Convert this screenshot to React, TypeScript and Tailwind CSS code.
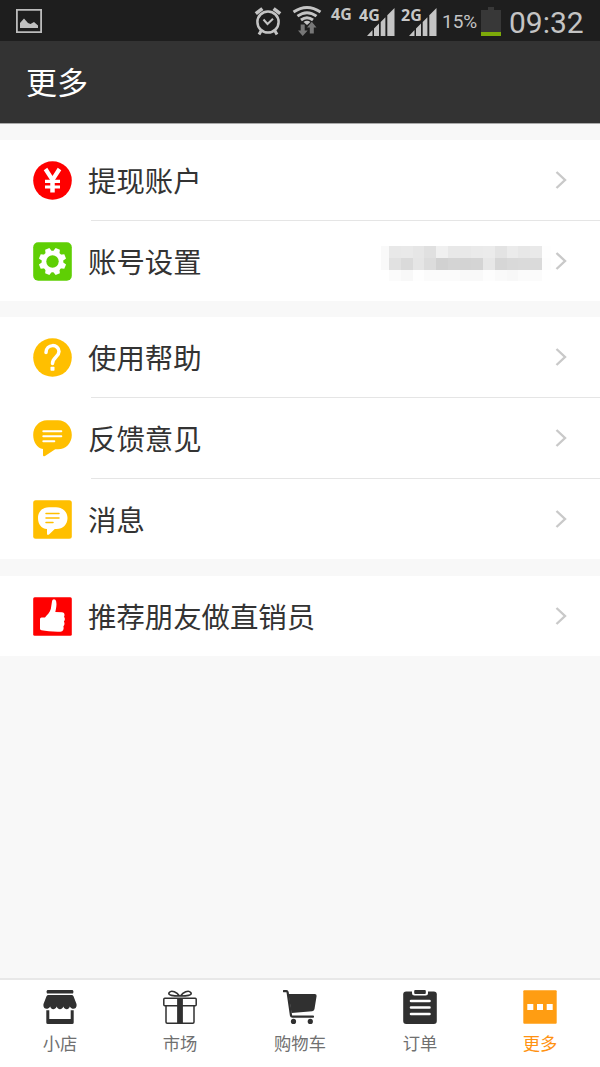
import type { ReactNode } from "react";

const mosaic: string[][] = [
  ["#f9f9f9", "#e8e8e8", "#e9e9e9", "#e6e6e6", "#e0e0e0", "#f0f0f0", "#e8e8e8", "#e8e8e8", "#eaeaea", "#ebebeb", "#e3e3e3", "#ebebeb", "#e7e7e7", "#e9e9e9", "#fefefe"],
  ["#f9f9f9", "#e1e1e1", "#dadada", "#e5e5e5", "#dcdcdc", "#d1d1d1", "#d4d4d4", "#d3d3d3", "#d4d4d4", "#e7e7e7", "#d6d6d6", "#d9d9d9", "#dadada", "#dadada", "#fdfdfd"],
  ["#ffffff", "#fbfbfb", "#f8f8f8", "#fefefe", "#fbfbfb", "#fbfbfb", "#fbfbfb", "#f9f9f9", "#f9f9f9", "#fdfdfd", "#fafafa", "#f8f8f8", "#fbfbfb", "#fbfbfb", "#ffffff"],
];

const toothAngles = [22.5, 67.5, 112.5, 157.5, 202.5, 247.5, 292.5, 337.5];

function PictureIcon() {
  return (
    <svg className="block" width="26" height="24" viewBox="0 0 26 24">
      <path d="M.9.9h24.2v22.2H.9z" fill="none" stroke="#bcbcbc" strokeWidth="1.8" />
      <path d="M4 19v-5l4-4.500 4 4.500 2.500 1L18 13l4 3.500V19z" fill="#c0c0c0" />
    </svg>
  );
}

function AlarmIcon() {
  return (
    <svg className="block" width="28" height="30" viewBox="0 0 28 30" fill="none" stroke="#c4c4c4">
      <circle cx="14" cy="16" r="10.600" strokeWidth="2.500" />
      <path d="M1.800 7.700 8.400 2.600M26.200 7.700 19.600 2.600" strokeWidth="3.600" />
      <path d="m9.500 13.500 4 4.500 5.500-5.300" strokeWidth="2" />
      <path d="m7 25-2 3.500M21 25l2 3.500" strokeWidth="3" />
    </svg>
  );
}

function WifiIcon() {
  return (
    <svg className="block" width="30" height="32" viewBox="0 0 30 32">
      <g fill="none" stroke="#c4c4c4" strokeWidth="2.900">
        <path d="M1.500 8Q15-1 28.500 8" />
        <path d="M5.500 12.200Q15 5.200 24.500 12.200" />
        <path d="M9 16Q15 11.500 21 16" />
      </g>
      <path d="m11.500 18 3.500 3 3.500-3Q15 15.400 11.500 18z" fill="#c4c4c4" />
      <path d="M8.700 20.500h4v6h3L10.700 32l-4.700-5.500h2.700zM17.800 29.500h4v-6h2.700L19.800 17.700 15 23.500h2.800z" fill="#777" />
    </svg>
  );
}

function Signal({ label }: { label: string }) {
  return (
    <div className="relative h-7 w-[28px]">
      <svg className="block" width="28" height="28" viewBox="0 0 28 28" fill="#c4c4c4">
        <path d="M0 28 5.500 22v6zM7 20.500l5-5V28H7zM13.700 14l4.700-4.700V28h-4.700zM20.300 7.300 27.500 0v28h-7.200z" />
      </svg>
      <span className="absolute -top-px -left-[8px] text-[16px] leading-4 font-bold text-[#c8c8c8] [font-family:'Noto_Sans',sans-serif] [text-shadow:0_0_2px_#1e1e1e,1px_1px_1px_#1e1e1e]">
        {label}
      </span>
    </div>
  );
}

function YenIcon() {
  return (
    <svg className="block" width="39" height="39" viewBox="0 0 39 39">
      <circle cx="19.500" cy="19.500" r="19.300" fill="#f00" />
      <path d="m12.500 8 7 10.800L26.500 8" fill="none" stroke="#fff" strokeWidth="4.200" />
      <path d="M12 20.300h15M12 26h15" stroke="#fff" strokeWidth="3.200" />
      <path d="M19.500 18v13.500" stroke="#fff" strokeWidth="4.500" />
    </svg>
  );
}

function GearIcon() {
  return (
    <svg className="block" width="39" height="39" viewBox="0 0 39 39">
      <rect x=".2" y=".2" width="38.600" height="38.600" rx="5" fill="#5fcf04" />
      <g fill="#fff" transform="translate(19.500 19.500)">
        <circle r="10.800" />
        {toothAngles.map((angle) => (
          <path key={angle} d="M-2.300-13.700h4.600l1.200 4.200h-7z" transform={`rotate(${angle})`} />
        ))}
        <circle r="6.200" fill="#5fcf04" />
      </g>
    </svg>
  );
}

function HelpIcon() {
  return (
    <svg className="block" width="39" height="39" viewBox="0 0 39 39">
      <circle cx="19.500" cy="19.500" r="19.300" fill="#ffbf00" />
      <path d="M13 14.500C13 5.500 26 5.500 26 13.500c0 5.300-6.500 5.800-6.500 12" fill="none" stroke="#fff" strokeWidth="3.500" strokeLinecap="round" />
      <rect x="17.500" y="28.700" width="4" height="4" rx=".7" fill="#fff" />
    </svg>
  );
}

function FeedbackIcon() {
  return (
    <svg className="block" width="39" height="39" viewBox="0 0 39 39">
      <path d="M14 1.200h11C33 1.200 38.800 8 38.800 16S33 30.300 25 30.300h-2.800L12 37q-2 1-2-1v-6C4 29 .2 23 .2 16 .2 8 6 1.200 14 1.200z" fill="#ffbf00" />
      <path d="M10.300 12.200h18M10.300 17.200h18M10.300 22.200h11" stroke="#fff" strokeWidth="2" strokeLinecap="round" />
    </svg>
  );
}

function MessageIcon() {
  return (
    <svg className="block" width="39" height="39" viewBox="0 0 39 39">
      <rect x=".2" y=".2" width="38.600" height="38.600" rx="2.500" fill="#ffbf00" />
      <path d="M16 7.200h7c7 0 11.500 5 11.500 10.800C34.500 24.500 30 29 23.500 29h-1.700L16 34.500q-2 1.200-2-1V29C8 28.500 5 24 5 18 5 12 9 7.200 16 7.200z" fill="#fff" />
      <path d="M13 13.500h13M13 18h13M13 22.500h7" stroke="#ffbf00" strokeWidth="1.500" strokeLinecap="round" />
    </svg>
  );
}

function ThumbIcon() {
  return (
    <svg className="block" width="39" height="39" viewBox="0 0 39 39">
      <rect x=".2" y=".2" width="38.600" height="38.600" rx="1.500" fill="#f00" />
      <path d="M7 22q0-1.500 1.500-1.500H12c2-2.500 4.800-5 5.800-8.500L19 4.500C19.500 1.500 22.500 1.700 23.200 4.500 24 8 23 11.500 22.300 15l6.700.3c2.700.2 3 3 2 4.500 1.300 1.500 1.100 3.700-.1 4.700 1 1.500.8 3.800-.5 4.800.8 3-.2 5.200-3 5.400C20 35 13.500 34 8.500 33.300Q7 33 7 31.700z" fill="#fff" />
    </svg>
  );
}

function ShopIcon() {
  return (
    <svg className="block" width="34" height="34" viewBox="0 0 34 34" fill="#303030">
      <rect x="3.700" width="26.600" height="3.600" rx="1.200" />
      <path d="M5.500 5h23Q30 5 30.500 6.200L33.500 14C34.500 19.500 29 20.300 26.800 16.500c-1 3.500-5 3.500-6.500 0-1.200 3.500-5.400 3.500-6.600 0-1.500 3.500-5.500 3.500-6.500 0C5 20.300-.5 19.500.5 14L3.500 6.200Q4 5 5.500 5z" />
      <path d="M3.300 20.300h3V29h21.400v-8.700h3v12.200q0 1.500-1.500 1.500H4.800q-1.500 0-1.500-1.500z" />
    </svg>
  );
}

function GiftIcon() {
  return (
    <svg className="block" width="34" height="34" viewBox="0 0 34 34" fill="none" stroke="#303030" strokeWidth="1.500">
      <rect x=".8" y="8.300" width="32.400" height="7.400" rx="1" />
      <path d="M3 16v16q0 1.200 1.200 1.200h25.600q1.200 0 1.200-1.200V16" />
      <path d="M17 8v26" strokeWidth="5.800" />
      <path d="M16.500 6C11 6 4 5.500 6.300 2.500 8.600-.6 14 2.500 16.500 6zM17.500 6C23 6 30 5.500 27.700 2.500 25.400-.6 20 2.500 17.500 6z" strokeWidth="1.600" />
    </svg>
  );
}

function CartIcon() {
  return (
    <svg className="block" width="34" height="34" viewBox="0 0 34 34" fill="#303030">
      <path d="M.8 1.200h2.600q1 0 1.200 1L8 25.500q.2 1.200 1.300 1.200H30" fill="none" stroke="#303030" strokeWidth="2.200" strokeLinecap="round" strokeLinejoin="round" />
      <path d="M5.500 4h26.300q2 0 1.800 2L31.500 19q-.3 2-2.300 2.200L8.500 23z" />
      <circle cx="10.500" cy="31.400" r="2.600" />
      <circle cx="27.300" cy="31.400" r="2.600" />
    </svg>
  );
}

function OrderIcon() {
  return (
    <svg className="block" width="34" height="34" viewBox="0 0 34 34">
      <rect x=".2" y="1.500" width="33.600" height="32.500" rx="3" fill="#303030" />
      <path d="M9 0h16v3q0 2.500-2.500 2.500h-11Q9 5.500 9 3z" fill="#fff" />
      <rect x="11.200" y="0" width="11.600" height="4" rx="1" fill="#303030" />
      <path d="M8 11h18.500M8 17.500h18.500M8 24h18.500" stroke="#fff" strokeWidth="2.600" strokeLinecap="round" />
    </svg>
  );
}

function MoreIcon() {
  return (
    <svg className="block" width="34" height="34" viewBox="0 0 34 34">
      <rect x=".3" y=".3" width="33.400" height="33.400" rx="1" fill="#ff9d12" />
      <path d="M4.300 14h6v6h-6zM14 14h6v6h-6zM23.700 14h6v6h-6z" fill="#fff" />
    </svg>
  );
}

function Row({ icon, label, children }: { icon: ReactNode; label: string; children?: ReactNode }) {
  return (
    <div className="flex h-20 items-center pr-8 pl-[33px]">
      {icon}
      <span className="-mt-px ml-4 text-[28.400px] leading-10 text-[#333]">{label}</span>
      <div className="ml-auto flex items-center">
        {children}
        <svg className="block" width="14" height="20" viewBox="0 0 14 20">
          <path d="m2.500 2 8.500 8-8.500 8" fill="none" stroke="#c9c9c9" strokeWidth="2.400" />
        </svg>
      </div>
    </div>
  );
}

function Divider() {
  return <div className="ml-[91px] h-px bg-[#e5e5e5]" />;
}

function Tab({ icon, label, active = false }: { icon: ReactNode; label: string; active?: boolean }) {
  return (
    <div className="flex w-[120px] flex-col items-center pt-[10px]">
      {icon}
      <span className={`mt-[7px] text-[17.300px] leading-6 ${active ? "text-[#ff9211]" : "text-[#707070]"}`}>{label}</span>
    </div>
  );
}

export default function App() {
  return (
    <div className="flex h-[1067px] w-[600px] flex-col overflow-hidden bg-[#f8f8f8] [font-family:'Noto_Sans_CJK_SC',sans-serif]">
      <div className="flex h-[41px] shrink-0 items-start bg-[#1e1e1e] pl-4 text-[#c4c4c4]">
        <div className="pt-[9px]"><PictureIcon /></div>
        <div className="ml-[212px] pt-[6px]"><AlarmIcon /></div>
        <div className="ml-[10px] pt-1"><WifiIcon /></div>
        <span className="mt-[6px] ml-[9px] w-[22px] text-[16px] leading-4 font-bold [font-family:'Noto_Sans',sans-serif]">4G</span>
        <div className="ml-[14px] pt-2"><Signal label="4G" /></div>
        <div className="ml-[14px] pt-2"><Signal label="2G" /></div>
        <span className="mt-[10px] ml-[5px] w-[37px] text-[19px] leading-6 [font-family:Roboto,sans-serif]">15%</span>
        <svg className="mt-[6px] ml-[2px] block" width="20" height="30" viewBox="0 0 20 30">
          <path d="M0 4h7V1h6v3h7v22H0z" fill="#383838" />
          <path d="M0 26h20v4H0z" fill="#7daa09" />
        </svg>
        <span className="mt-[5px] ml-2 text-[30px] leading-9 [font-family:Roboto,sans-serif]">09:32</span>
      </div>
      <header className="flex h-[83px] shrink-0 items-center border-b border-[#aaa] bg-[#333] pb-[2px] pl-[26px]">
        <h1 className="text-[31px] leading-[42px] font-normal text-white">更多</h1>
      </header>
      <main className="flex flex-1 flex-col pt-4">
        <section className="mb-[17px] bg-white">
          <Row icon={<YenIcon />} label="提现账户" />
          <Divider />
          <Row icon={<GearIcon />} label="账号设置">
            <div className="mt-[4px] mr-[3px] grid w-[170px] grid-cols-[8px_repeat(13,1fr)_9px] grid-rows-[12px_12px_11px]">
              {mosaic.flat().map((color, index) => (
                <div key={index} style={{ backgroundColor: color }} />
              ))}
            </div>
          </Row>
        </section>
        <section className="-mt-px mb-[17px] bg-white">
          <Row icon={<HelpIcon />} label="使用帮助" />
          <Divider />
          <Row icon={<FeedbackIcon />} label="反馈意见" />
          <Divider />
          <Row icon={<MessageIcon />} label="消息" />
        </section>
        <section className="bg-white">
          <Row icon={<ThumbIcon />} label="推荐朋友做直销员" />
        </section>
      </main>
      <nav className="flex h-[89px] shrink-0 border-t-2 border-[#e8e8e8] bg-white">
        <Tab icon={<ShopIcon />} label="小店" />
        <Tab icon={<GiftIcon />} label="市场" />
        <Tab icon={<CartIcon />} label="购物车" />
        <Tab icon={<OrderIcon />} label="订单" />
        <Tab icon={<MoreIcon />} label="更多" active />
      </nav>
    </div>
  );
}
